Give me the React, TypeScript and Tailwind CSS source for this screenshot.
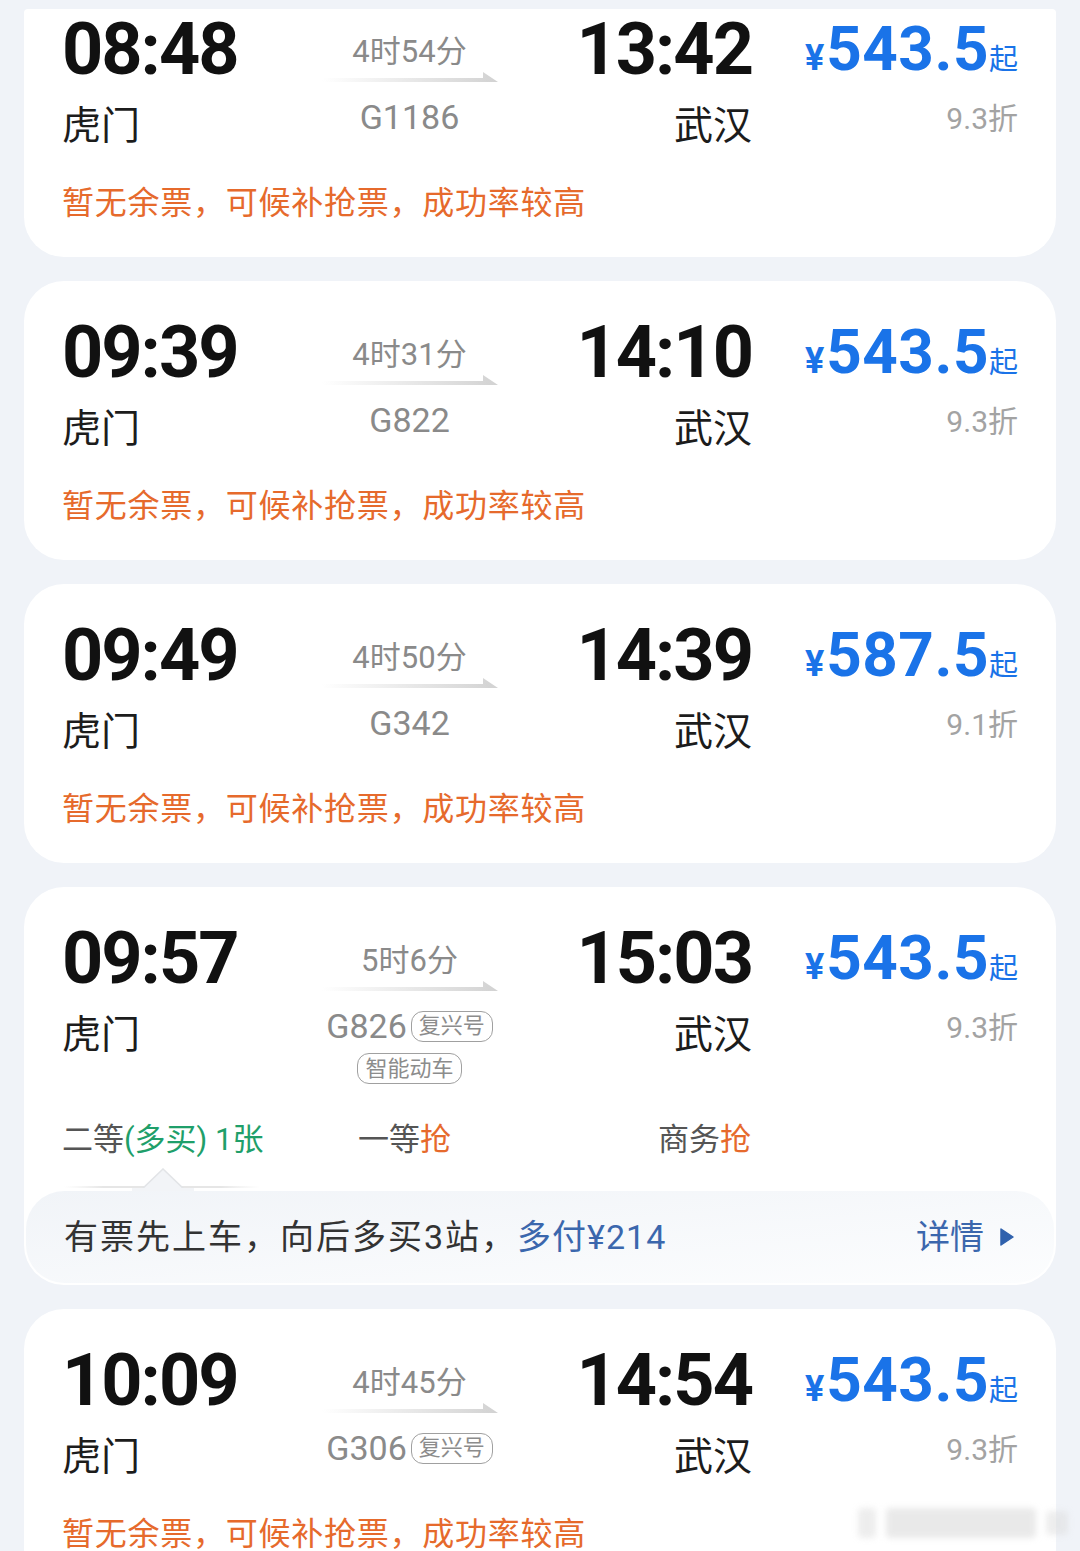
import React from 'react';

type Train = {
  dep: string;
  dur: string;
  no: string;
  arr: string;
  price: string;
  disc: string;
  badges?: string[];
  extraBadge?: string;
  seats?: boolean;
};

const trains: Train[] = [
  { dep: '08:48', dur: '4时54分', no: 'G1186', arr: '13:42', price: '543.5', disc: '9.3折' },
  { dep: '09:39', dur: '4时31分', no: 'G822', arr: '14:10', price: '543.5', disc: '9.3折' },
  { dep: '09:49', dur: '4时50分', no: 'G342', arr: '14:39', price: '587.5', disc: '9.1折' },
  {
    dep: '09:57',
    dur: '5时6分',
    no: 'G826',
    arr: '15:03',
    price: '543.5',
    disc: '9.3折',
    badges: ['复兴号'],
    extraBadge: '智能动车',
    seats: true,
  },
  { dep: '10:09', dur: '4时45分', no: 'G306', arr: '14:54', price: '543.5', disc: '9.3折', badges: ['复兴号'] },
];

function Arrow() {
  return (
    <svg width="176" height="11" viewBox="0 0 176 11" className="block">
      <defs>
        <linearGradient id="arrowGrad" x1="0" x2="1" y1="0" y2="0">
          <stop offset="0" stopColor="#ffffff" />
          <stop offset="1" stopColor="#d2d2d2" />
        </linearGradient>
      </defs>
      <polygon points="0,6 161,6 161,0 176,10 0,10" fill="url(#arrowGrad)" />
    </svg>
  );
}

function Badge({ label }: { label: string }) {
  return (
    <span className="inline-flex items-center h-[31px] px-[7px] rounded-[12px] border-[1.5px] border-[#a0a0a0] text-[22px] leading-none text-[#8c8c8c]">
      {label}
    </span>
  );
}

function TabIndicator() {
  return (
    <svg width="200" height="23" viewBox="0 0 200 23" className="block ml-[38px] mt-[8px]">
      <defs>
        <linearGradient id="tabLine" x1="0" x2="1" y1="0" y2="0">
          <stop offset="0" stopColor="#ececec" stopOpacity="0" />
          <stop offset="0.2" stopColor="#e6e6e6" />
          <stop offset="0.8" stopColor="#e6e6e6" />
          <stop offset="1" stopColor="#ececec" stopOpacity="0" />
        </linearGradient>
      </defs>
      <rect x="2" y="18" width="196" height="2" fill="url(#tabLine)" />
      <polygon points="78,23 101,1 124,23" fill="#f2f4f7" stroke="#e2e4e7" strokeWidth="1.5" />
      <rect x="70" y="20" width="62" height="3" fill="#f2f4f7" />
    </svg>
  );
}

function TrainCard({ t, first }: { t: Train; first?: boolean }) {
  return (
    <div
      className={
        first
          ? 'bg-white rounded-t-[4px] rounded-b-[40px] pt-[1px] pb-[32px]'
          : t.seats
            ? 'bg-white rounded-[40px] pt-[32px] pb-[2px]'
            : 'bg-white rounded-[40px] pt-[32px] pb-[32px]'
      }
    >
      {/* Times / stations / price */}
      <div className="grid grid-cols-[260px_175px_255px_266px] px-[38px]">
        <div className="flex flex-col">
          <div className="text-[72px] leading-[80px] font-bold tracking-[-2px] text-[#111]">{t.dep}</div>
          <div className="mt-[11px] text-[39px] leading-[50px] text-[#1c1c1c]">虎门</div>
        </div>

        <div className="flex flex-col items-center">
          <div className="mt-[24px] text-[31px] leading-[36px] text-[#8a8a8a]">{t.dur}</div>
          <div className="mt-[2px]">
            <Arrow />
          </div>
          <div className="mt-[14px] flex items-center gap-[4px] text-[34px] leading-[40px] text-[#8a8a8a]">
            <span>{t.no}</span>
            {t.badges?.map((b) => <Badge key={b} label={b} />)}
          </div>
          {t.extraBadge && (
            <div className="mt-[7px]">
              <Badge label={t.extraBadge} />
            </div>
          )}
        </div>

        <div className="flex flex-col items-end">
          <div className="text-[72px] leading-[80px] font-bold tracking-[-2px] text-[#111]">{t.arr}</div>
          <div className="mt-[11px] text-[39px] leading-[50px] text-[#1c1c1c]">武汉</div>
        </div>

        <div className="flex flex-col items-end">
          <div className="mt-[4px] flex items-baseline leading-[70px] text-[#1a73e8]">
            <span className="mr-[2px] text-[36px] font-bold">¥</span>
            <span className="text-[62px] font-bold tracking-[0.5px]">{t.price}</span>
            <span className="text-[29px]">起</span>
          </div>
          <div className="mt-[6px] text-[30px] leading-[36px] text-[#a3a3a3]">{t.disc}</div>
        </div>
      </div>

      {t.seats ? (
        <>
          {/* Seat classes */}
          <div className="mt-[36px] flex px-[38px] text-[31px] leading-[40px]">
            <div className="w-[296px]">
              <span className="text-[#555]">二等</span>
              <span className="text-[#1f9f6a]">(多买) 1张</span>
            </div>
            <div className="w-[300px]">
              <span className="text-[#555]">一等</span>
              <span className="text-[#e66a2c]">抢</span>
            </div>
            <div>
              <span className="text-[#555]">商务</span>
              <span className="text-[#e66a2c]">抢</span>
            </div>
          </div>

          <TabIndicator />

          {/* Buy-more tip */}
          <div className="mx-[2px] h-[92px] rounded-[38px] bg-linear-to-br from-[#f1f4f8] to-[#fcfdfe] flex items-center justify-between pl-[38px] pr-[40px]">
            <div className="text-[34px] leading-[44px] tracking-[2px]">
              <span className="text-[#333]">有票先上车，向后多买3站，</span>
              <span className="text-[#3b67ad] tracking-[1px]">多付¥214</span>
            </div>
            <div className="flex items-center gap-[16px] text-[34px] leading-[44px] text-[#3b67ad]">
              <span>详情</span>
              <svg width="14" height="18" viewBox="0 0 14 18">
                <polygon points="1,1 13,9 1,17" fill="#2f61ad" stroke="#2f61ad" strokeWidth="1.5" strokeLinejoin="round" />
              </svg>
            </div>
          </div>
        </>
      ) : (
        <div className="mt-[30px] px-[38px] text-[32px] leading-[44px] tracking-[0.75px] text-[#e66a2c]">
          暂无余票，可候补抢票，成功率较高
        </div>
      )}
    </div>
  );
}

export default function App() {
  return (
    <div className="relative h-[1551px] w-[1080px] overflow-hidden bg-[#f0f3f8] font-[Roboto,'Noto_Sans_CJK_SC',sans-serif]">
      <div className="flex flex-col gap-[24px] px-[24px] pt-[9px]">
        {trains.map((t, i) => (
          <TrainCard key={t.no} t={t} first={i === 0} />
        ))}
      </div>

      {/* blurred watermark */}
      <div className="absolute left-[858px] top-[1508px] flex items-center gap-[10px] opacity-50 blur-[3px]">
        <div className="h-[30px] w-[18px] rounded-[4px] bg-[#dcdcdc]" />
        <div className="h-[30px] w-[150px] rounded-[4px] bg-[#d4d4d4]" />
        <div className="h-[24px] w-[22px] rounded-[4px] bg-[#dcdcdc]" />
      </div>
    </div>
  );
}
